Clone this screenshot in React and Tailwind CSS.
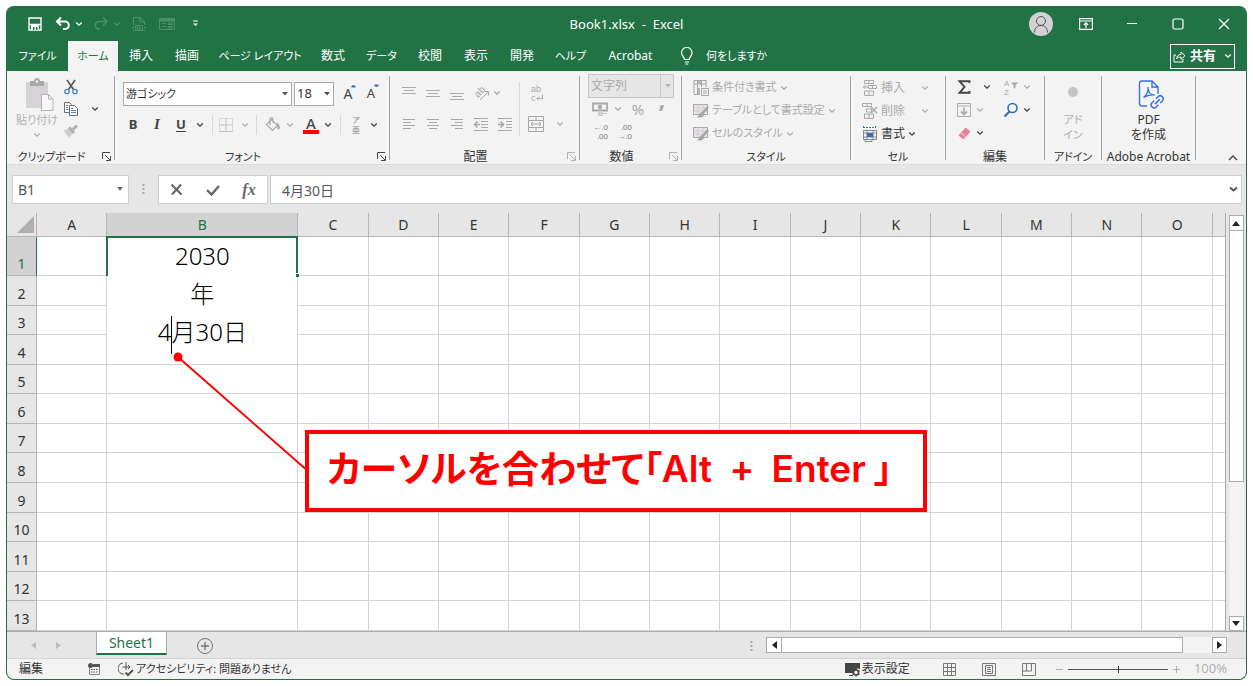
import { useState } from 'react';
import clsx from 'clsx';

const MENU = [
  { name: '挿入', size: 'w-6' },
  { name: '描画', size: 'w-6' },
  { name: 'ページ レイアウト', size: 'w-[78px] text-[11px]' },
  { name: '数式', size: 'w-6' },
  { name: 'データ', size: 'w-[29px] text-[11px]' },
  { name: '校閲', size: 'w-6' },
  { name: '表示', size: 'w-6' },
  { name: '開発', size: 'w-6' },
  { name: 'ヘルプ', size: 'w-[29px] text-[11px]' },
  { name: 'Acrobat', size: 'w-[47px] text-xs' },
];
const COLUMNS = ['A', 'B', 'C', 'D', 'E', 'F', 'G', 'H', 'I', 'J', 'K', 'L', 'M', 'N', 'O'];
const ROWS = [1, 2, 3, 4, 5, 6, 7, 8, 9, 10, 11, 12, 13];

function Icon({ w = 16, h = 16, className, children }) {
  return (
    <svg
      width={w}
      height={h}
      viewBox={`0 0 ${w} ${h}`}
      fill="none"
      stroke="currentColor"
      className={clsx('shrink-0', className)}
      aria-hidden="true"
    >
      {children}
    </svg>
  );
}

function Chevron({ className = 'text-[#444]' }) {
  return (
    <Icon w={8} h={6} className={className}>
      <path d="M1.2 1.5 4 4.2 6.8 1.5" strokeWidth="1.3" />
    </Icon>
  );
}

function Triangle({ className }) {
  return (
    <Icon w={6} h={4} className={className}>
      <path d="M0 0h6L3 3.6z" fill="currentColor" stroke="none" />
    </Icon>
  );
}

function IconButton({ label, className, children }) {
  return (
    <button aria-label={label} className={clsx('flex shrink-0 items-center justify-center', className)}>
      {children}
    </button>
  );
}

function Divider() {
  return <span className="h-[84px] w-px shrink-0 bg-[#a3a3a3]" />;
}

function Group({ label, width, launcher, labelSize = 'text-[11px]', children }) {
  return (
    <section className={clsx('flex h-[88px] shrink-0 flex-col', width)}>
      <div className="min-h-0 flex-1">{children}</div>
      <div
        className={clsx(
          'relative flex h-4 items-center justify-center whitespace-nowrap pt-0.5 text-[#333]',
          launcher && 'pr-[18px]',
          labelSize
        )}
      >
        {label}
        {launcher && (
          <IconButton label={`${label}の設定`} className={clsx('absolute right-[3px] top-1', launcher)}>
            <Icon w={9} h={9}>
              <path d="M.5 7V.5H8M3 3l5 5M8.5 4v4.5H4" />
            </Icon>
          </IconButton>
        )}
      </div>
    </section>
  );
}

/* ---------- Title bar and tabs ---------- */

function TitleBar() {
  return (
    <div className="relative flex h-[35px] items-center text-white">
      <div className="flex items-center pl-[20px]">
        <IconButton label="上書き保存" className="w-4">
          <Icon w={14} h={14}>
            <path d="M1 1h12v12H1z" strokeWidth="1.4" />
            <path d="M3 8h8v5H3z" fill="currentColor" stroke="none" />
            <path d="M5 10h1.500v3H5zM8 10h1.500v3H8z" fill="#217346" stroke="none" />
            <path d="M1 7.500h12" strokeWidth="1.400" />
          </Icon>
        </IconButton>
        <IconButton label="元に戻す" className="ml-3 w-4">
          <Icon>
            <path d="M2 5.500h8a3.800 3.800 0 0 1 0 7.600H8" strokeWidth="2" />
            <path d="M6 1.500 2 5.500l4 4" strokeWidth="2" />
          </Icon>
        </IconButton>
        <IconButton label="元に戻す一覧" className="ml-0.5 w-3"><Chevron className="text-white" /></IconButton>
        <IconButton label="やり直し" className="ml-2 w-4 text-[#4d9069]">
          <Icon>
            <path d="M14 5.500H6a3.800 3.800 0 0 0 0 7.600h1" strokeWidth="1.500" />
            <path d="m10 1.500 4 4-4 4" strokeWidth="1.500" />
          </Icon>
        </IconButton>
        <IconButton label="やり直し一覧" className="ml-0.5 w-3"><Chevron className="text-[#4d9069]" /></IconButton>
        <IconButton label="印刷プレビュー" className="ml-2 w-4 text-[#4d9069]">
          <Icon>
            <path d="M2.500 9V1.500H9L13.500 6v3M9 1.500V6h4.500M2.500 13.500v1h11v-1M1 11.500h2m10 0h2" />
            <path d="M4.500 9.500h7v3.500h-7zM6.500 10v3m2-3v3" />
          </Icon>
        </IconButton>
        <IconButton label="フォーム" className="ml-3 w-4 text-[#4d9069]">
          <Icon>
            <path d="M.5 2.500h15v11H.5z" />
            <path d="M.5 3h15v2H.5z" fill="currentColor" />
            <path d="M3 7.500h4M3 10.500h4M9 7h4.500v1.500H9zM9 10.500h4.500V12H9z" />
          </Icon>
        </IconButton>
        <IconButton label="クイック アクセス ツール バーのカスタマイズ" className="ml-3.5 w-3">
          <Icon w={7} h={7}>
            <path d="M1 1h5" strokeWidth="1.200" />
            <path d="M1 3.500h5L3.500 6z" fill="currentColor" stroke="none" />
          </Icon>
        </IconButton>
      </div>

      <h1 className="absolute left-1/2 -translate-x-1/2 whitespace-pre pt-0.5 text-[13px]">Book1.xlsx  -  Excel</h1>

      <div className="ml-auto flex items-center">
        <IconButton label="アカウント" className="size-6 rounded-full bg-[#d2d2d2] text-[#555]">
          <Icon w={18} h={18}>
            <circle cx="9" cy="6" r="4.500" />
            <path d="M2.500 17.500C2.500 8 15.500 8 15.500 17.500" />
          </Icon>
        </IconButton>
        <IconButton label="リボンの表示オプション" className="ml-[23px] h-6 w-5">
          <Icon w={14} h={12}>
            <path d="M.6.600h12.800v10.800H.6zM.6 3h12.800M7 10V5M4.800 7 7 4.800 9.200 7" strokeWidth="1.200" />
          </Icon>
        </IconButton>
        <IconButton label="最小化" className="ml-[26px] h-6 w-5">
          <Icon w={12} h={12}><path d="M1 5.500h10" strokeWidth="1.200" /></Icon>
        </IconButton>
        <IconButton label="最大化" className="ml-[26px] h-6 w-5">
          <Icon w={12} h={12}><rect x="1" y="1" width="10" height="10" rx="1.500" strokeWidth="1.200" /></Icon>
        </IconButton>
        <IconButton label="閉じる" className="ml-[26px] mr-[12px] h-6 w-5">
          <Icon w={12} h={12}><path d="m1 1 10 10M11 1 1 11" strokeWidth="1.200" /></Icon>
        </IconButton>
      </div>
    </div>
  );
}

function MenuBar() {
  return (
    <nav className="flex h-[30px] items-center whitespace-nowrap pr-[11px] text-xs text-white">
      <button className="w-[61px] text-[11px]">ファイル</button>
      <button className="h-full w-[50px] bg-[#f3f3f3] text-[11px] text-[#217346]">ホーム</button>
      <div className="ml-[11px] flex items-center gap-[22px]">
        {MENU.map(({ name, size }) => (
          <button key={name} className={clsx('flex justify-center', size)}>{name}</button>
        ))}
      </div>
      <button className="ml-[26px] flex items-center gap-3 text-[11px]">
        <Icon w={14} h={18}>
          <path d="M4.500 12.500C4.500 10 1.500 9 1.500 5.800a5.300 5.300 0 0 1 10.600 0C12.100 9 9.200 10 9.200 12.500zM4.800 15h4.200M5.500 17h2.800" strokeWidth="1.200" />
        </Icon>
        何をしますか
      </button>
      <button className="ml-auto flex h-[25px] w-[65px] items-center justify-center gap-1 border border-white text-[13px] font-bold">
        <Icon w={13} h={13}>
          <path d="M3 5H1v7h9V9M3.500 9C4 6 5.500 4.500 8 4.500V2l4 3.700-4 3.600V7C6 7 4.500 7.500 3.500 9z" />
        </Icon>
        共有
        <Chevron className="ml-1 text-white" />
      </button>
    </nav>
  );
}

/* ---------- Ribbon ---------- */

function Lines({ rows }) {
  return (
    <Icon>
      {rows.map(([x1, x2, y]) => <path key={y} d={`M${x1} ${y}H${x2}`} />)}
    </Icon>
  );
}

function ClipboardGroup() {
  return (
    <Group label="クリップボード" width="w-[107px]" launcher="text-[#444]">
      <div className="flex pl-[10px]">
        <button className="flex w-10 flex-col items-center text-[11px] text-[#b1b1b1]">
          <Icon w={32} h={34} className="ml-1 mt-0.5">
            <path d="M3 4h22v26H3z" fill="#d5d3d5" stroke="none" />
            <path d="M7 3h4c0-4 6-4 6 0h4v5H7z" fill="#aaa" stroke="none" />
            <circle cx="14" cy="3.500" r="1.300" fill="#f3f3f3" stroke="none" />
            <path d="M18.500 16.500h7l4.500 4.500v11.500H18.500z" fill="#f7f5f7" stroke="#b5b5b5" />
            <path d="M25.500 16.500V21H30" />
          </Icon>
          <span className="whitespace-nowrap leading-4">貼り付け</span>
          <Chevron className="mt-1 text-[#b1b1b1]" />
        </button>
        <div className="ml-1.5 flex flex-col">
          <IconButton label="切り取り" className="h-[22px] w-4">
            <Icon>
              <path d="M4 1l6.500 9.500M12 1 5.500 10.500" stroke="#555" strokeWidth="1.600" />
              <circle cx="4" cy="12.500" r="2.200" stroke="#4a86c5" strokeWidth="1.300" />
              <circle cx="12" cy="12.500" r="2.200" stroke="#4a86c5" strokeWidth="1.300" />
            </Icon>
          </IconButton>
          <IconButton label="コピー" className="h-[22px] w-4">
            <Icon className="text-[#6d6d6d]">
              <path d="M1.500 1.500h5l2 2v8h-7z" fill="#fff" />
              <path d="M6.500 4.500h5l3 3v7h-8z" fill="#fff" />
              <path d="M3 4.500h2M3 6.500h2M3 8.500h2M8 7.500h2M8 9.500h5M8 11.500h5" stroke="#4a86c5" />
            </Icon>
          </IconButton>
          <IconButton label="書式のコピー/貼り付け" className="h-[22px] w-4">
            <Icon className="text-[#b1b1b1]">
              <path d="m1 8 5-3 4.500 4.500L6 15z" fill="#d0cdd0" stroke="none" />
              <path d="m6 4.500 5 5.500M9 7.500l5-5" strokeWidth="3" />
            </Icon>
          </IconButton>
        </div>
        <IconButton label="コピーのオプション" className="ml-2.5 mt-[22px] h-[22px] w-3"><Chevron /></IconButton>
      </div>
    </Group>
  );
}

function SmallDivider({ className = 'h-5' }) {
  return <span className={clsx('w-px shrink-0 bg-[#d8d8d8]', className)} />;
}

function FontGroup() {
  return (
    <Group label="フォント" width="w-[274px]" launcher="text-[#444]">
      <div className="flex items-center pl-2 pt-1.5">
        <div className="relative w-[169px]">
          <select aria-label="フォント名" className="h-6 w-full appearance-none border border-[#ababab] bg-white px-0.5 text-[11px] text-[#333]">
            <option>游ゴシック</option>
          </select>
          <Triangle className="pointer-events-none absolute right-1 top-[10px] text-[#555]" />
        </div>
        <div className="relative ml-0.5 w-10">
          <select aria-label="フォント サイズ" className="h-6 w-full appearance-none border border-[#ababab] bg-white px-0.5 text-[13px] text-[#333]">
            <option>18</option>
          </select>
          <Triangle className="pointer-events-none absolute right-1 top-[10px] text-[#555]" />
        </div>
        <IconButton label="フォント サイズの拡大" className="relative ml-1.5 h-6 w-4 text-sm text-[#444]">
          A
          <Icon w={5} h={4} className="absolute right-0 top-0.5 text-[#3b73b9]"><path d="M.5 3 2.500 1l2 2z" fill="currentColor" /></Icon>
        </IconButton>
        <IconButton label="フォント サイズの縮小" className="relative ml-[7px] h-6 w-4 text-[13px] text-[#444]">
          A
          <Icon w={5} h={4} className="absolute right-0 top-0.5 text-[#3b73b9]"><path d="M.5 1 2.500 3l2-2z" fill="currentColor" /></Icon>
        </IconButton>
      </div>
      <div className="mt-2 flex h-[22px] items-center pl-1.5 text-[#444]">
        <IconButton label="太字" className="w-6 text-[13px] font-bold">B</IconButton>
        <IconButton label="斜体" className="w-6 font-['Liberation_Serif',serif] text-[15px] font-bold italic">I</IconButton>
        <IconButton label="下線" className="w-6 text-[13px] font-bold underline underline-offset-2">U</IconButton>
        <IconButton label="下線の種類" className="w-3.5"><Chevron /></IconButton>
        <SmallDivider className="mx-[5px] h-5" />
        <IconButton label="罫線" className="w-4">
          <Icon className="text-[#c4bfc4]">
            <path d="M1.500 1.500h13v13h-13z" strokeDasharray="1 1" />
            <path d="M8 1v14M1 8h14M1 14.500h14" />
          </Icon>
        </IconButton>
        <IconButton label="罫線の種類" className="ml-1 w-3.5"><Chevron className="text-[#b1b1b1]" /></IconButton>
        <SmallDivider className="mx-1 h-5" />
        <IconButton label="塗りつぶしの色" className="ml-1 w-4">
          <Icon className="text-[#aaa]">
            <path d="m6.500 2.500 6 6-5 5-6-6zM5 8V2.500C5 0 8 0 8 2.500V6M13 7c2 3 1.500 5 0 5z" strokeWidth="1.200" />
          </Icon>
        </IconButton>
        <IconButton label="塗りつぶしの一覧" className="ml-0.5 w-3.5"><Chevron className="text-[#b1b1b1]" /></IconButton>
        <IconButton label="フォントの色" className="ml-1.5 h-[18px] w-4 border-b-4 border-[#f00] text-[15px] font-medium">A</IconButton>
        <IconButton label="フォントの色一覧" className="ml-0.5 w-3.5"><Chevron /></IconButton>
        <SmallDivider className="mx-[5px] h-5" />
        <IconButton label="ふりがな" className="ml-1 h-5 w-3 flex-col text-[8px] leading-[10px] text-[#888]">
          <span>ア</span>
          <span>亜</span>
        </IconButton>
        <IconButton label="ふりがなの一覧" className="ml-[5px] w-3.5"><Chevron /></IconButton>
      </div>
    </Group>
  );
}

function AlignmentGroup() {
  return (
    <Group label="配置" width="w-[189px]" launcher="text-[#b1b1b1]" labelSize="text-xs">
      <div className="flex pl-[11px] pt-1.5 font-['Liberation_Sans',sans-serif] text-[#a8a8a8]">
        <div>
          <div className="flex h-[22px] items-center gap-2">
            <IconButton label="上揃え"><Lines rows={[[1, 15, 2.5], [3, 13, 5.5], [1, 15, 8.5]]} /></IconButton>
            <IconButton label="上下中央揃え"><Lines rows={[[1, 15, 5.5], [3, 13, 8.5], [1, 15, 11.5]]} /></IconButton>
            <IconButton label="下揃え"><Lines rows={[[1, 15, 8.5], [3, 13, 11.5], [1, 15, 14.5]]} /></IconButton>
            <IconButton label="方向" className="gap-1">
              <Icon w={16}>
                <text x="0" y="0" transform="translate(5 13) rotate(-45)" fontSize="10" fill="currentColor" stroke="none">ab</text>
                <path d="m7 15 8-8M11.500 6.500H15.500V10.500" />
              </Icon>
              <Chevron className="text-[#a8a8a8]" />
            </IconButton>
          </div>
          <div className="mt-[9px] flex h-[22px] items-center gap-2">
            <IconButton label="左揃え"><Lines rows={[[2, 14, 3.5], [2, 10, 6.5], [2, 14, 9.5], [2, 10, 12.5]]} /></IconButton>
            <IconButton label="中央揃え"><Lines rows={[[2, 14, 3.5], [4, 12, 6.5], [2, 14, 9.5], [4, 12, 12.5]]} /></IconButton>
            <IconButton label="右揃え"><Lines rows={[[2, 14, 3.5], [6, 14, 6.5], [2, 14, 9.5], [6, 14, 12.5]]} /></IconButton>
            <IconButton label="インデントを減らす">
              <Icon>
                <path d="M1 2.500h14M8 5.500h7M8 8.500h7M8 11.500h7M1 14.500h14" />
                <path d="M7 8.500H1.500M4.500 5.500l-3 3 3 3" strokeWidth="1.600" />
              </Icon>
            </IconButton>
            <IconButton label="インデントを増やす">
              <Icon>
                <path d="M1 2.500h14M9 5.500h6M9 8.500h6M9 11.500h6M1 14.500h14" />
                <path d="M1 8.500h5.500M3.500 5.500l3 3-3 3" strokeWidth="1.600" />
              </Icon>
            </IconButton>
          </div>
        </div>
        <SmallDivider className="ml-1.5 h-[54px]" />
        <div className="ml-2">
          <IconButton label="折り返して全体を表示する" className="h-[22px]">
            <Icon h={20}>
              <text x="3" y="9" fontSize="9" fill="currentColor" stroke="none">ab</text>
              <text x="3" y="18" fontSize="9" fill="currentColor" stroke="none">c</text>
              <path d="M14.500 11.500V15.500H9M11 13.500l-2 2 2 2" />
            </Icon>
          </IconButton>
          <IconButton label="セルを結合して中央揃え" className="mt-[9px] h-[22px] gap-3">
            <Icon>
              <path d="M.5.500h15v15H.5zM.5 4.500h15M.5 11.500h15M8 .5v4M8 11.500v4M3 8h10M5 6 3 8l2 2M11 6l2 2-2 2" />
            </Icon>
            <Chevron className="text-[#b1b1b1]" />
          </IconButton>
        </div>
      </div>
    </Group>
  );
}

function NumberGroup() {
  return (
    <Group label="数値" width="w-[101px]" launcher="text-[#b1b1b1]" labelSize="text-xs">
      <div className="relative -mt-0.5 ml-2 w-[86px]">
        <select disabled aria-label="表示形式" className="h-6 w-full appearance-none border border-[#c6c6c6] bg-[#e6e6e6] px-0.5 text-xs text-[#aaa] opacity-100">
          <option>文字列</option>
        </select>
        <span className="pointer-events-none absolute right-0 top-0 flex h-6 w-[14px] items-center justify-center border-l border-[#c6c6c6]">
          <Triangle className="text-[#b1b1b1]" />
        </span>
      </div>
      <div className="flex h-[22px] items-center pl-3 text-[#a8a8a8]">
        <IconButton label="通貨表示形式" className="gap-1.5">
          <Icon>
            <path d="M1 2.500h14v7H1z" strokeWidth="1.800" />
            <circle cx="8" cy="6" r="1.800" fill="currentColor" />
            <path d="M6 10h5v5H6z" fill="#d6d6d6" stroke="none" />
            <path d="M11 8.500h4M11 10.500h4M11 12.500h4M6 12.500h4M6 14.500h4" stroke="#c8c8c8" />
          </Icon>
          <Chevron className="text-[#a8a8a8]" />
        </IconButton>
        <IconButton label="パーセント スタイル" className="ml-1.5 w-5 text-[15px]">%</IconButton>
        <IconButton label="桁区切りスタイル" className="ml-1.5 h-[22px] w-4 items-start text-2xl font-bold leading-[2px]">,</IconButton>
      </div>
      <div className="flex h-6 items-center gap-2 pl-3 font-['Liberation_Sans',sans-serif] text-[8px] leading-[9px] text-[#777]">
        <IconButton label="小数点以下の表示桁数を増やす" className="w-4 flex-col items-end"><span>←.0</span><span>.00</span></IconButton>
        <IconButton label="小数点以下の表示桁数を減らす" className="w-4 flex-col items-end"><span>.00</span><span>→.0</span></IconButton>
      </div>
    </Group>
  );
}

function StyleIcon({ conditional }) {
  if (conditional) {
    return (
      <Icon className="text-[#a5a5a5]">
        <path d="M1 .5h12V7M1 .5v14h6M4.500.5v14M8.500.5V7M1 4h12" />
        <path d="M5 1h3v3H5zM5 8h2v6H5z" fill="#b8b8b8" stroke="none" />
        <path d="M8.500 8.500h7v7h-7zM10 11h4M10 13h4" />
      </Icon>
    );
  }
  return (
    <Icon className="text-[#a5a5a5]">
      <path d="M.5 1.500h14v10H.5z" fill="#eae6ea" />
      <path d="M.5 5h14M.5 8h14M5 1.500v10M10 1.500v10" stroke="#cfcacf" />
      <path d="m15 4-6 7" strokeWidth="2.500" />
      <path d="M9 9c-3 0-2 4-5 5 4 1.500 7 0 7-3z" fill="currentColor" stroke="none" />
    </Icon>
  );
}

function StylesGroup() {
  const items = ['条件付き書式', 'テーブルとして書式設定', 'セルのスタイル'];
  return (
    <Group label="スタイル" width="w-[168px]">
      <div className="flex flex-col items-start pl-[11px]">
        {items.map((item, i) => (
          <button key={item} className="flex h-[23px] items-center gap-[3px] whitespace-nowrap text-[11px] text-[#aaa]">
            <StyleIcon conditional={i === 0} />
            {item}
            <Chevron className="text-[#aaa]" />
          </button>
        ))}
      </div>
    </Group>
  );
}

function CellsGroup() {
  return (
    <Group label="セル" width="w-[94px]">
      <div className="flex flex-col items-start pl-[11px] text-xs text-[#aaa]">
        <button className="flex h-[23px] w-[67px] items-center gap-[3px]">
          <Icon>
            <path d="M2.500.500h9v3h-9zM7 .5v3M6.500 5.500h8v3h-8zM10.500 5.500v3M2.500 11h9v4.500h-9zM7 11v4.500M1 7h5M3.500 5 1.500 7l2 2" />
          </Icon>
          挿入
          <Chevron className="ml-auto text-[#b1b1b1]" />
        </button>
        <button className="flex h-[23px] w-[67px] items-center gap-[3px]">
          <Icon>
            <path d="M.5.500h9v3h-9zM5 .5v3M4.500 6h5v3h-5zM2.500 11h9v4.500h-9zM7 11v4.500" />
            <path d="m9 4 6 6M15 4l-6 6" strokeWidth="1.500" />
          </Icon>
          削除
          <Chevron className="ml-auto text-[#b1b1b1]" />
        </button>
        <button className="flex h-[23px] items-center gap-[3px] text-[#333]">
          <Icon>
            <path d="M1 1.500h13M1.500 0v3M13.500 0v3" stroke="#2f75b5" strokeDasharray="2 1" />
            <path d="M1.500 4.500h13v9h-13zM1.500 7h13M1.500 11h13M5 4.500v9M11 4.500v9M3 14v1.500h7V14" stroke="#888" />
            <path d="M5 7h6v4H5z" fill="#2f75b5" stroke="none" />
          </Icon>
          書式
          <Chevron />
        </button>
      </div>
    </Group>
  );
}

function EditingGroup() {
  return (
    <Group label="編集" width="w-[98px]" labelSize="text-xs">
      <div className="grid grid-cols-[44px_1fr] pl-[10px]">
        <IconButton label="オート SUM" className="h-[22px] justify-start gap-[11px]">
          <Icon className="text-[#444]"><path d="M13.500 4V2.200H3.500L8.500 8l-5 5.800h10V12" strokeWidth="1.900" /></Icon>
          <Chevron />
        </IconButton>
        <IconButton label="並べ替えとフィルター" className="h-[22px] justify-start gap-1 pl-[3px] font-['Liberation_Sans',sans-serif] text-[#aaa]">
          <Icon h={18}>
            <text x="1" y="8" fontSize="8" fill="currentColor" stroke="none">A</text>
            <text x="1" y="17" fontSize="8" fill="currentColor" stroke="none">Z</text>
            <path d="M8 4.500h7l-2.500 3v3l-2-1V7.500z" fill="currentColor" stroke="none" />
          </Icon>
          <Chevron className="text-[#aaa]" />
        </IconButton>
        <IconButton label="フィル" className="h-[23px] justify-start gap-1">
          <Icon className="text-[#b3abb3]">
            <path d="M1.500 1.500h13v13h-13zM1.500 4h13" />
            <path d="M8 5.500V12M5 9.500l3 3 3-3" strokeWidth="1.800" />
          </Icon>
          <Chevron className="text-[#b1b1b1]" />
        </IconButton>
        <IconButton label="検索と選択" className="h-[23px] justify-start gap-1 pl-[3px]">
          <Icon className="text-[#2f6eb5]">
            <circle cx="9.500" cy="6" r="4.500" strokeWidth="1.600" />
            <path d="M6.500 9.500 1.500 14.500" strokeWidth="2.200" />
          </Icon>
          <Chevron />
        </IconButton>
        <IconButton label="クリア" className="h-[23px] justify-start gap-1">
          <Icon>
            <path d="m9.500 2.500 5 4-7 8-5-4z" fill="#e8819a" stroke="none" />
            <path d="m4.500 7.500 5 4.500" stroke="#f8d9df" />
          </Icon>
          <Chevron />
        </IconButton>
      </div>
    </Group>
  );
}

function Ribbon() {
  return (
    <div className="flex h-[93px] items-start bg-[#f3f3f3] pt-[5px] text-xs">
      <ClipboardGroup />
      <Divider />
      <FontGroup />
      <Divider />
      <AlignmentGroup />
      <Divider />
      <NumberGroup />
      <Divider />
      <StylesGroup />
      <Divider />
      <CellsGroup />
      <Divider />
      <EditingGroup />
      <Divider />
      <Group label="アドイン" width="w-[56px]">
        <button className="flex w-full flex-col items-center pt-[11px] leading-[15px] text-[#b1b1b1]">
          <span className="mb-[15px] size-[10px] rounded-full bg-[#c4c4c4]" />
          <span className="text-[11px]">アド</span>
          <span className="text-[11px]">イン</span>
        </button>
      </Group>
      <Divider />
      <Group label="Adobe Acrobat" width="w-[93px]" labelSize="text-xs">
        <button className="flex w-full flex-col items-center pt-[3px] leading-[15px] text-[#333]">
          <Icon w={28} h={30} className="mb-[3px] ml-1 text-[#3a6ee8]">
            <path d="M10 27H5a2.500 2.500 0 0 1-2.500-2.500v-20A2.500 2.500 0 0 1 5 2h10l6 6v7M15 2v6h6" strokeWidth="1.400" />
            <path d="M6.500 18.500c4-3 5-6 4.500-10.500 0 5 2.500 8 6.500 8-4-.5-7 0-11 2.500z" strokeWidth="1.300" />
            <g transform="rotate(-45 20 23)" strokeWidth="1.500">
              <path d="M19 20h-3a3 3 0 0 0 0 6h3M21.500 20h3a3 3 0 0 1 0 6h-3M17 23h7" />
            </g>
          </Icon>
          <span>PDF</span>
          <span>を作成</span>
        </button>
      </Group>
      <Divider />
      <IconButton label="リボンを折りたたむ" className="ml-auto mr-2 mt-[78px]">
        <Icon w={10} h={7} className="text-[#444]"><path d="m1 6 4-4 4 4" strokeWidth="1.300" /></Icon>
      </IconButton>
    </div>
  );
}

function FormulaBar() {
  return (
    <div className="flex h-[49px] items-start border-t border-[#dcdcdc] bg-[#e6e6e6] pl-[5px] pr-1 pt-[10px] text-[#555]">
      <div className="relative w-[117px]">
        <input aria-label="名前ボックス" defaultValue="B1" className="h-[29px] w-full border border-[#cfcfcf] bg-white px-[5px] text-sm" />
        <Triangle className="pointer-events-none absolute right-1.5 top-3 text-[#666]" />
      </div>
      <Dots className="ml-3 mt-2" />
      <div className="ml-3 flex h-[29px] w-[110px] items-center justify-around border border-[#cfcfcf] bg-white text-[#666]">
        <IconButton label="キャンセル"><Icon w={13} h={13}><path d="m1.500 1.500 10 10M11 1.500l-9 10" strokeWidth="2" /></Icon></IconButton>
        <IconButton label="入力"><Icon w={14} h={12}><path d="m1 6 4.500 4.500L13 2" strokeWidth="2.400" /></Icon></IconButton>
        <IconButton label="関数の挿入" className="font-['Liberation_Serif',serif] text-base font-bold italic">fx</IconButton>
      </div>
      <div className="relative ml-0.5 flex-1">
        <input aria-label="数式バー" defaultValue="4月30日" className="h-[29px] w-full border border-[#cfcfcf] bg-white px-[11px] text-sm" />
        <Icon w={9} h={7} className="pointer-events-none absolute right-1 top-[11px] text-[#555]"><path d="m1 1.500 3.500 3 3.500-3" strokeWidth="2" /></Icon>
      </div>
    </div>
  );
}

function Dots({ className }) {
  return (
    <Icon w={5} h={12} className={className}>
      <path d="M1.500 1h2v2h-2zM1.500 5h2v2h-2zM1.500 9h2v2h-2z" fill="#aaa" stroke="none" />
    </Icon>
  );
}

/* ---------- Worksheet ---------- */

function CellEditor() {
  const [value, setValue] = useState('2030\n年\n4月30日');
  return (
    <div className="absolute left-0 top-0 z-10 h-[127px] w-full bg-white">
      <div className="pointer-events-none absolute -left-px -right-px -top-px h-10 border-2 border-b-0 border-[#217346]" />
      <textarea
        aria-label="セル B1"
        value={value}
        onChange={(e) => setValue(e.target.value)}
        className="block h-[117px] w-full resize-none overflow-hidden bg-transparent text-center text-2xl font-light leading-[38px] text-black outline-none"
      />
      {/* Text caret */}
      <span className="absolute left-[64px] top-[79px] h-[38px] w-px bg-black" />
      <span className="absolute -right-0.5 top-9 size-1 border-l border-t border-white bg-[#217346]" />
    </div>
  );
}

function Sheet() {
  return (
    <div className="min-w-0 flex-1 border-r border-[#ababab] bg-white">
      <table className="h-[418px] w-full table-fixed border-separate border-spacing-0 text-sm text-[#333]">
        <colgroup>
          <col className="w-[30px]" />
          {COLUMNS.map((c) => <col key={c} className={clsx(c === 'B' && 'w-[191px]')} />)}
          <col className="w-3" />
        </colgroup>
        <thead>
          <tr className="h-6">
            <th aria-label="すべて選択" className="border-b border-r border-[#b5b5b5] bg-[#e6e6e6] p-0">
              <Icon w={18} h={17} className="ml-auto mr-0.5 text-[#b0b0b0]"><path d="M18 0v17H1z" fill="currentColor" stroke="none" /></Icon>
            </th>
            {COLUMNS.map((c) => (
              <th
                key={c}
                className={clsx(
                  'border-b border-r border-[#b5b5b5] p-0 font-normal',
                  c === 'B' ? 'bg-[#d2d2d2] text-[#217346]' : 'bg-[#e6e6e6]'
                )}
              >
                {c}
              </th>
            ))}
            <th className="border-b border-[#b5b5b5] bg-[#e6e6e6] p-0" />
          </tr>
        </thead>
        <tbody>
          {ROWS.map((r) => (
            <tr key={r} className={clsx(r === 1 && 'h-[39px]')}>
              <th
                className={clsx(
                  'border-b border-r p-0 align-bottom font-normal leading-[23px]',
                  r === 1 ? 'border-b-[#b5b5b5] border-r-[#217346] bg-[#d2d2d2] text-[#217346]' : 'border-[#b5b5b5] bg-[#e6e6e6]'
                )}
              >
                {r}
              </th>
              {COLUMNS.map((c) => (
                <td key={c} className="relative border-b border-r border-[#d4d4d4] p-0">
                  {r === 1 && c === 'B' && <CellEditor />}
                </td>
              ))}
              <td className="border-b border-[#d4d4d4] p-0" />
            </tr>
          ))}
        </tbody>
      </table>
    </div>
  );
}

function VerticalScroll() {
  return (
    <div className="flex w-5 flex-col items-center bg-[#e6e6e6] pt-0.5">
      <IconButton label="上へスクロール" className="h-4 w-[15px] border border-[#ababab] bg-white">
        <Icon w={8} h={5}><path d="M0 5h8L4 0z" fill="#222" stroke="none" /></Icon>
      </IconButton>
      <div className="w-[15px] flex-1 bg-[#f3f3f3]">
        <div className="h-[251px] border border-t-0 border-[#ababab] bg-white" />
      </div>
      <IconButton label="下へスクロール" className="h-[15px] w-[15px] border border-[#ababab] bg-white">
        <Icon w={8} h={5}><path d="M0 0h8L4 5z" fill="#222" stroke="none" /></Icon>
      </IconButton>
    </div>
  );
}

function SheetTabs() {
  return (
    <div className="flex h-[27px] items-start border-t border-[#ababab] bg-[#e6e6e6]">
      <IconButton label="前のシート" className="ml-[22px] h-[27px] w-2"><Icon w={5} h={7}><path d="M5 0v7L0 3.500z" fill="#bbb" stroke="none" /></Icon></IconButton>
      <IconButton label="次のシート" className="ml-[17px] h-[27px] w-2"><Icon w={5} h={7}><path d="M0 0v7l5-3.500z" fill="#bbb" stroke="none" /></Icon></IconButton>
      <button className="ml-[34px] h-[23px] w-[71px] border-x border-b-2 border-x-[#ababab] border-b-[#217346] bg-white text-sm text-[#217346]">Sheet1</button>
      <IconButton label="新しいシート" className="ml-[30px] h-[27px] w-4 text-[#777]">
        <Icon><circle cx="8" cy="8" r="7.500" /><path d="M8 4v8M4 8h8" strokeWidth="1.300" /></Icon>
      </IconButton>
      <Dots className="ml-auto mt-2" />
      <div className="ml-3 mr-[19px] mt-[5px] flex h-4 w-[461px]">
        <IconButton label="左へスクロール" className="h-4 w-4 border border-[#ababab] bg-white">
          <Icon w={5} h={8}><path d="M5 0v8L0 4z" fill="#222" stroke="none" /></Icon>
        </IconButton>
        <div className="flex-1 bg-[#f3f3f3] pr-[29px]">
          <div className="h-4 border border-l-0 border-[#ababab] bg-white" />
        </div>
        <IconButton label="右へスクロール" className="h-4 w-[15px] border border-[#ababab] bg-white">
          <Icon w={5} h={8}><path d="M0 0v8l5-4z" fill="#222" stroke="none" /></Icon>
        </IconButton>
      </div>
    </div>
  );
}

function StatusBar() {
  return (
    <footer className="flex h-[21px] items-center whitespace-nowrap border-t border-[#d4d4d4] bg-[#f3f3f3] text-xs text-[#333]">
      <span className="ml-3">編集</span>
      <IconButton label="マクロの記録" className="ml-[43px] w-4">
        <Icon w={12} h={12} className="text-[#555]">
          <path d="M1.500 3v8.500h10V1.500H5M1.500 3.500h10" stroke="#888" />
          <circle cx="2.500" cy="2.500" r="2.500" fill="currentColor" stroke="none" />
          <path d="M5.500 1.500h6v2h-6z" fill="currentColor" />
          <path d="M3 6.500h1.500m1 0H7m1 0h1.500M3 9h1.500m1 0H7m1 0h1.500" />
        </Icon>
      </IconButton>
      <button className="ml-4 flex items-center gap-0.5 text-[11px]">
        <Icon className="text-[#555]">
          <path d="M5 2a5.500 5.500 0 0 0 1 11M8 1v8M4.500 6h7M10 4l2 2-2 2" />
          <path d="m7.500 11.500 2.500 2.500 5-5" strokeWidth="2" />
        </Icon>
        アクセシビリティ: 問題ありません
      </button>
      <button className="ml-auto flex items-center gap-0.5">
        <Icon w={15} h={15} className="text-[#444]">
          <path d="M0 1h15v6a5 5 0 0 0-7 4H0zM4 13h4v1H4z" fill="currentColor" stroke="none" />
          <circle cx="11" cy="10.500" r="2.500" strokeWidth="1.500" />
          <path d="M11 6.500v1.500M11 13v1.500M7.500 8.500l1.300.8M13.200 11.700l1.300.8M14.500 8.500l-1.300.8M8.800 11.700l-1.300.8" strokeWidth="1.500" />
        </Icon>
        表示設定
      </button>
      <div className="ml-[33px] flex items-center gap-[26px] text-[#777]">
        <IconButton label="標準"><Icon w={13} h={13}><path d="M.5.500h12v12H.5zM.5 4.500h12M.5 8.500h12M4.500.500v12M8.500.500v12" /></Icon></IconButton>
        <IconButton label="ページ レイアウト"><Icon w={14} h={13}><path d="M.5.500h13v12H.5zM3.500 2.500h7v8h-7zM5 4.500h4M5 6.500h4M5 8.500h4" /></Icon></IconButton>
        <IconButton label="改ページ プレビュー"><Icon w={14} h={13}><path d="M.5.500h13v12H.5zM4.500.500v7.500M9.500.500v7.500M.5 8h9" /></Icon></IconButton>
      </div>
      <IconButton label="縮小" className="ml-[18px] w-3 text-[#b1b1b1]"><Icon w={9} h={9}><path d="M1 4.500h7" /></Icon></IconButton>
      <label className="relative ml-0.5 flex h-4 w-[100px] items-center">
        <span className="h-px w-full bg-[#555]" />
        <span className="absolute left-1/2 h-[7px] w-px bg-[#333]" />
        <input type="range" min="10" max="190" defaultValue="100" aria-label="ズーム" className="absolute inset-0 w-full opacity-0" />
      </label>
      <IconButton label="拡大" className="ml-[3px] w-3 text-[#b1b1b1]"><Icon w={9} h={9}><path d="M1 4.500h7M4.500 1v7" /></Icon></IconButton>
      <span className="ml-[11px] mr-[19px] text-[13px] text-[#b1b1b1]">100%</span>
    </footer>
  );
}

function Callout() {
  return (
    <>
      <svg className="pointer-events-none absolute left-[165px] top-[346px] z-20" width="140" height="122" fill="none">
        <path d="M6 5l131 115" stroke="#f00" strokeWidth="2" />
        <circle cx="6" cy="5" r="4.500" fill="#f00" />
      </svg>
      <p className="absolute left-[298px] top-[424px] z-20 flex h-[82px] w-[622px] items-center whitespace-pre border-4 border-[#f00] bg-white pb-1 pl-[18px] text-[37px] font-bold text-[#f00]">
        カーソルを合わせて「
        <span className="mr-2 font-['Inter',sans-serif] font-semibold">
          Alt <span className="mx-2">+</span> Enter
        </span>
        」
      </p>
    </>
  );
}

export default function App() {
  return (
    <div
      lang="ja"
      className="overflow-hidden bg-white p-1.5 pb-0 font-['Noto_Sans','Noto_Sans_CJK_JP',sans-serif] [font-feature-settings:'palt']"
    >
      <main className="relative overflow-hidden rounded-lg border border-t-0 border-[#217346] bg-[#217346]">
        <TitleBar />
        <MenuBar />
        <Ribbon />
        <FormulaBar />
        <div className="flex">
          <Sheet />
          <VerticalScroll />
        </div>
        <SheetTabs />
        <StatusBar />
        <Callout />
      </main>
    </div>
  );
}
